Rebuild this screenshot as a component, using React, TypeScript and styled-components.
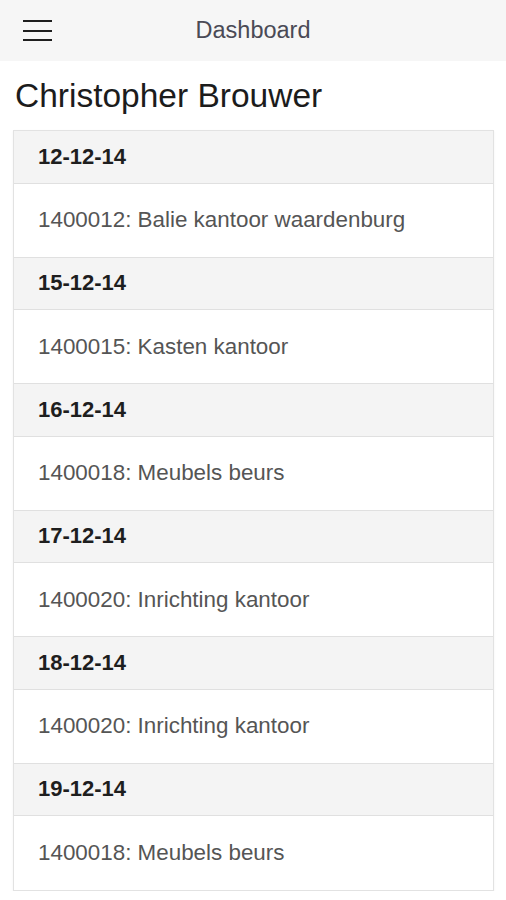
import React from "react";
import styled, { createGlobalStyle } from "styled-components";

const Global = createGlobalStyle`
  html, body { margin: 0; padding: 0; background: #ffffff; }
  body { font-family: "Liberation Sans", Arial, sans-serif; }
`;

const TopBar = styled.header`
  position: relative;
  height: 61px;
  background: #f6f6f6;
  display: flex;
  align-items: center;
  justify-content: center;
`;

const MenuButton = styled.button`
  position: absolute;
  left: 23px;
  top: 20px;
  width: 29px;
  height: 21px;
  padding: 0;
  border: none;
  background: transparent;
  display: flex;
  flex-direction: column;
  justify-content: space-between;
`;

const MenuLine = styled.span`
  display: block;
  height: 2px;
  width: 29px;
  background: #1e1e1e;
`;

const BarTitle = styled.div`
  font-size: 23.5px;
  color: #4a4a55;
`;

const Title = styled.h1`
  margin: 0;
  padding: 15px 15px 14px;
  font-size: 33.5px;
  line-height: 40px;
  font-weight: normal;
  color: #1c1c1c;
`;

const Card = styled.div`
  margin: 0 12px 0 13px;
  border: 1px solid #e2e2e2;
  box-shadow: 0 1px 2px rgba(0, 0, 0, 0.06);
`;

const DateRow = styled.div`
  height: 52.5px;
  box-sizing: border-box;
  background: #f4f4f4;
  border-bottom: 1px solid #e0e0e0;
  display: flex;
  align-items: center;
  padding-left: 24px;
  font-size: 22px;
  font-weight: bold;
  color: #1e1e1e;
`;

const ItemRow = styled.div<{ $last?: boolean }>`
  height: 74px;
  box-sizing: border-box;
  background: #ffffff;
  border-bottom: ${(p) => (p.$last ? "none" : "1px solid #e0e0e0")};
  display: flex;
  align-items: center;
  padding-left: 24px;
  font-size: 22.4px;
  color: #555555;
`;

const entries = [
  { date: "12-12-14", text: "1400012: Balie kantoor waardenburg" },
  { date: "15-12-14", text: "1400015: Kasten kantoor" },
  { date: "16-12-14", text: "1400018: Meubels beurs" },
  { date: "17-12-14", text: "1400020: Inrichting kantoor" },
  { date: "18-12-14", text: "1400020: Inrichting kantoor" },
  { date: "19-12-14", text: "1400018: Meubels beurs" },
];

export default function App() {
  return (
    <>
      <Global />
      <TopBar>
        <MenuButton aria-label="menu">
          <MenuLine />
          <MenuLine />
          <MenuLine />
        </MenuButton>
        <BarTitle>Dashboard</BarTitle>
      </TopBar>
      <Title>Christopher Brouwer</Title>
      <Card>
        {entries.map((e, i) => (
          <React.Fragment key={i}>
            <DateRow>{e.date}</DateRow>
            <ItemRow $last={i === entries.length - 1}>{e.text}</ItemRow>
          </React.Fragment>
        ))}
      </Card>
    </>
  );
}
